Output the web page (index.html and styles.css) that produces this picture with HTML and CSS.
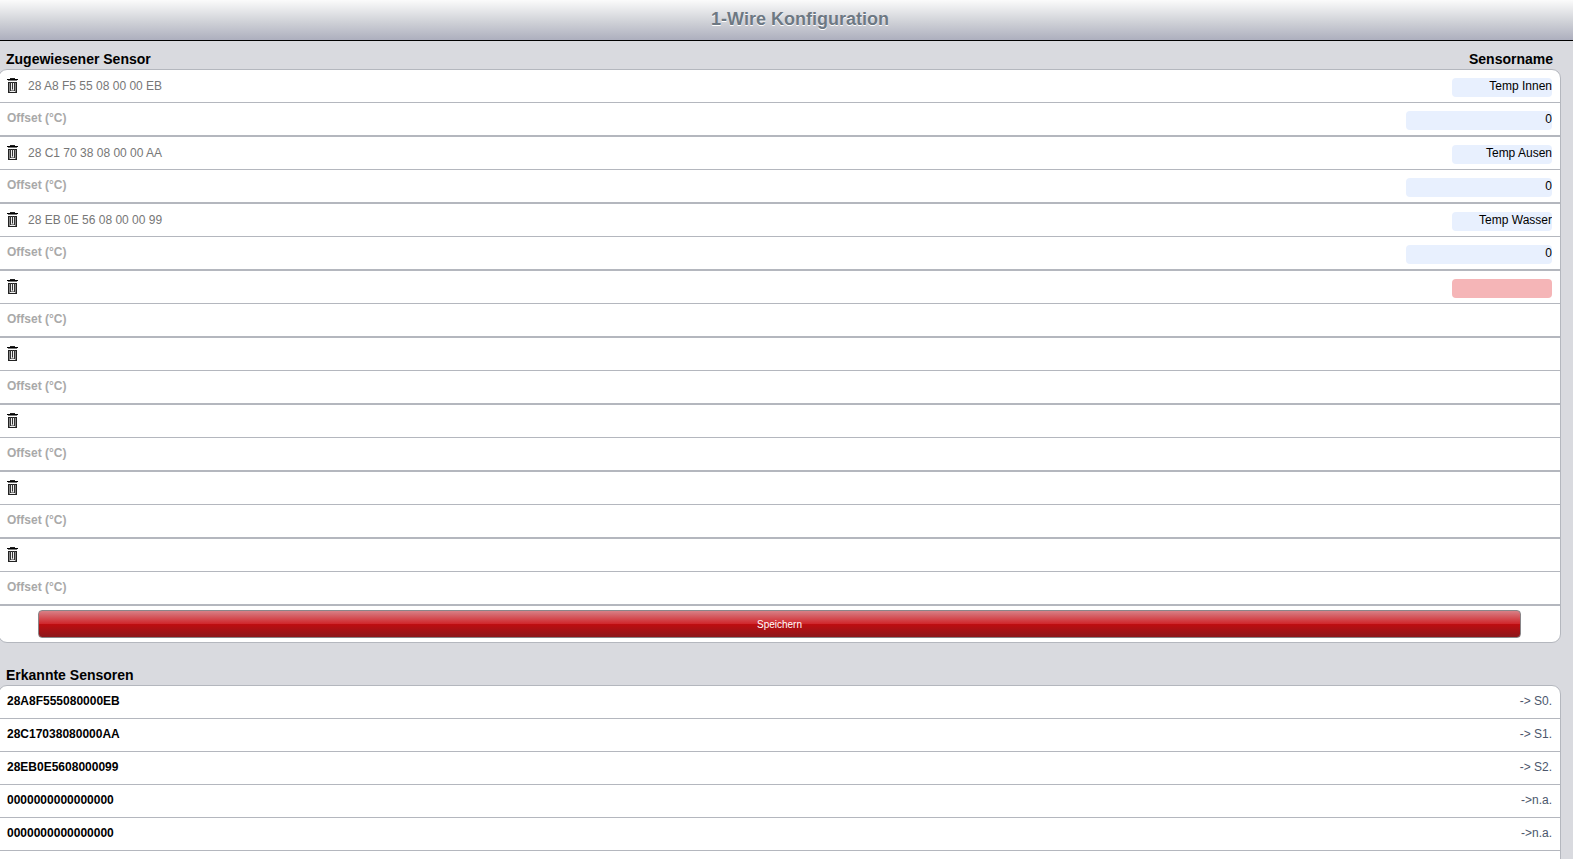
FILE: index.html
```html
<!DOCTYPE html>
<html lang="de">
<head>
    <meta charset="UTF-8">
    <meta name="viewport" content="width=device-width, initial-scale=1.0">
    <title>1-Wire Konfiguration</title>
    <link rel="stylesheet" href="styles.css">
</head>
<body>
    <svg class="sprite" aria-hidden="true">
        <symbol id="trash" viewBox="0 0 11 15">
            <path fill="#222" d="M3 0h5v1h-5z"/>
            <path fill="#000" d="M0 1h11v1H0z"/>
            <path fill="#777" d="M1 2h9v1H1z"/>
            <path fill="#222" d="M1 4h9v11H1z"/>
            <path fill="#888" d="M2 5h7v9H2z"/>
            <path fill="#333" d="M3 4h1v9H3zM5 4h1v7H5zM7 4h1v9H7z"/>
            <path fill="#eee" d="M4 5h1v7H4zM6 5h1v7H6zM3 13h5v1H3z"/>
        </symbol>
    </svg>

    <header class="topbar">
        <h1>1-Wire Konfiguration</h1>
    </header>

    <form action="" method="post">
        <div class="heading">
            <h2>Zugewiesener Sensor</h2>
            <h2>Sensorname</h2>
        </div>
        <ul class="list" id="sensors">
            <li class="save"><button type="submit">Speichern</button></li>
        </ul>
    </form>

    <section class="found">
        <div class="heading">
            <h2>Erkannte Sensoren</h2>
        </div>
        <ul class="list">
            <li class="row"><b>28A8F555080000EB</b><span>-&gt; S0.</span></li>
            <li class="row"><b>28C17038080000AA</b><span>-&gt; S1.</span></li>
            <li class="row"><b>28EB0E5608000099</b><span>-&gt; S2.</span></li>
            <li class="row"><b>0000000000000000</b><span>-&gt;n.a.</span></li>
            <li class="row"><b>0000000000000000</b><span>-&gt;n.a.</span></li>
            <li class="row"></li>
        </ul>
    </section>

    <script>
        const sensors = [
            { id: '28 A8 F5 55 08 00 00 EB', name: 'Temp Innen', offset: 0 },
            { id: '28 C1 70 38 08 00 00 AA', name: 'Temp Ausen', offset: 0 },
            { id: '28 EB 0E 56 08 00 00 99', name: 'Temp Wasser', offset: 0 },
            { id: '', name: '' },
            {}, {}, {}, {}
        ];

        let rows = '';
        sensors.forEach(function (sensor, i) {
            let name = '';
            let offset = '';
            let label = 'Offset (°C)';
            if (sensor.name !== undefined) {
                name = `<input class="name" type="text" aria-label="Sensorname" name="n${i}" value="${sensor.name}" required>`;
            }
            if (sensor.offset !== undefined) {
                label = `<label for="o${i}">${label}</label>`;
                offset = `<input class="offset" type="text" id="o${i}" name="o${i}" value="${sensor.offset}">`;
            } else {
                label = `<span class="label">${label}</span>`;
            }
            rows += `<li class="row">
                        <button class="delete" type="button" aria-label="Löschen"><svg><use href="#trash"/></svg></button>
                        <span class="id">${sensor.id || ''}</span>
                        ${name}
                    </li>
                    <li class="row last">${label}${offset}</li>`;
        });
        document.querySelector('#sensors').insertAdjacentHTML('afterbegin', rows);
    </script>
</body>
</html>
```
FILE: styles.css
```css
*{
    box-sizing: border-box;
}
body{
    margin: 0;
    height: 100vh;
    overflow: hidden;
    background-color: #d9dadf;
    font-family: Arial, "Liberation Sans", sans-serif;
    font-size: 12px;
    color: #000;
}
.sprite{
    display: none;
}
.topbar{
    height: 41px;
    padding-left: 27px;
    border-bottom: 1px solid #000;
    background: linear-gradient(#fbfbfb, #d3d5da 50%, #adafbe);
    text-align: center;
}
h1{
    margin: 0;
    font-size: 18px;
    line-height: 38px;
    color: #6d7883;
    text-shadow: 0 1px 0 #fff;
}
.heading{
    display: flex;
    justify-content: space-between;
    padding: 8px 20px 0 6px;
}
h2{
    margin: 0;
    font-size: 14px;
    line-height: 20px;
}
.list{
    margin: 0 12px 0 -2px;
    padding: 0;
    list-style: none;
    background-color: #fff;
    border: 1px solid #b4b7be;
    border-radius: 9px;
}
.row{
    display: flex;
    height: 33px;
    padding: 0 8px;
    border-bottom: 1px solid #b4b7be;
    line-height: 32px;
}
.last{
    height: 34px;
    border-bottom-width: 2px;
}
.delete{
    width: 11px;
    height: 15px;
    margin: 8px 10px 0 0;
    padding: 0;
    border: 0;
    background: none;
}
.delete svg{
    display: block;
    width: 11px;
    height: 15px;
}
.id{
    color: #777;
}
.row label, .label{
    color: #a9a9a9;
    font-weight: bold;
    line-height: 30px;
}
.row input{
    height: 19px;
    margin: 8px 0 0 auto;
    padding: 0 0 4px;
    border: 0;
    border-radius: 4px;
    background-color: #e8f0fe;
    font: 12px Arial, "Liberation Sans", sans-serif;
    text-align: right;
}
.row .name{
    width: 100px;
}
.row .name:invalid{
    background-color: #f5b5b7;
}
.row .offset{
    width: 146px;
}
.save{
    height: 36px;
    padding-top: 4px;
}
.save button{
    display: block;
    width: 95%;
    height: 28px;
    margin: 0 auto;
    border: 1px solid #8a8588;
    border-radius: 4px;
    background: linear-gradient(#d88086, #d0272c 49%, #bf0d10 50%, #8c171b);
    font: 10px Arial, "Liberation Sans", sans-serif;
    color: #fff;
}
.found{
    margin-top: 14px;
}
.found .row{
    justify-content: space-between;
    line-height: 30px;
}
.found span{
    color: #4c566c;
}
```
